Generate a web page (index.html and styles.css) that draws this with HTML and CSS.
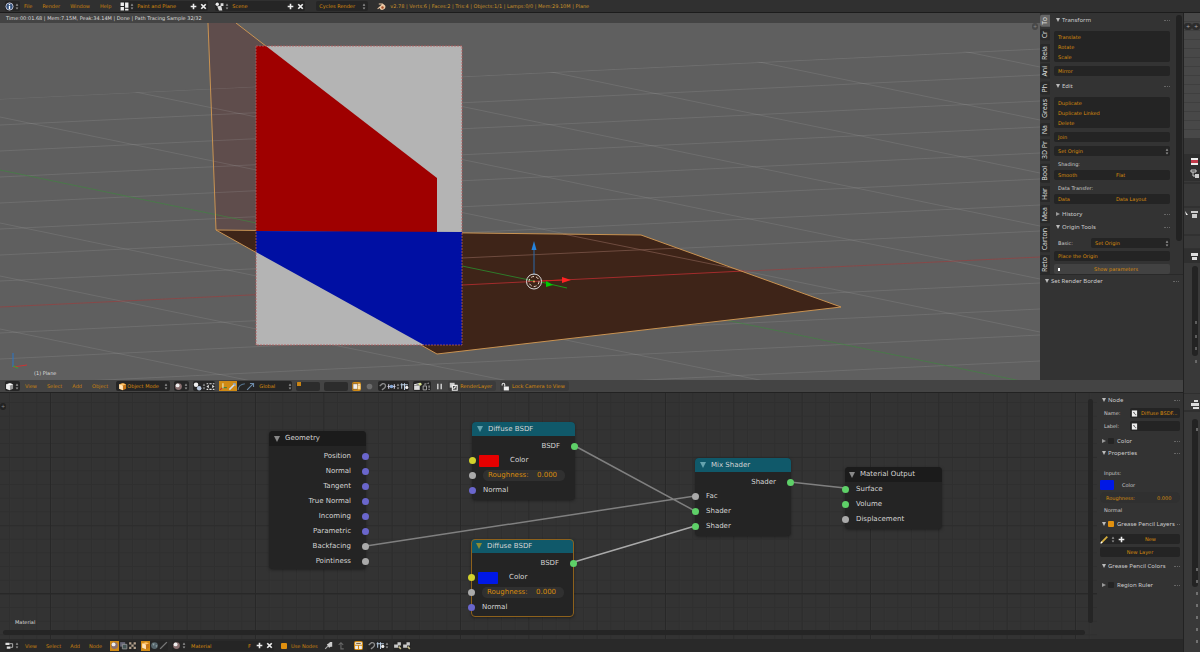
FILE: index.html
```
<!DOCTYPE html>
<html lang="en">
<head>
    <meta charset="UTF-8">
    <meta name="viewport" content="width=device-width, initial-scale=1.0">
    <title>Blender</title>
    <link rel="stylesheet" href="styles.css">
</head>
<body>

<svg class="defs" width="0" height="0">
    <symbol id="updown" viewBox="0 0 4 8"><path d="M0.5 3L2 0.5L3.5 3ZM0.5 5L2 7.5L3.5 5Z" fill="#999"/></symbol>
    <symbol id="plus" viewBox="0 0 8 8"><path d="M4 1.5V6.5M1.5 4H6.5" stroke="#eee" stroke-width="1.4"/></symbol>
    <symbol id="cross" viewBox="0 0 8 8"><path d="M2 2L6 6M6 2L2 6" stroke="#eee" stroke-width="1.5"/></symbol>
    <symbol id="info" viewBox="0 0 8 8"><circle cx="4" cy="4" r="3.2" fill="#34527c" stroke="#ccd" stroke-width="0.8"/><path d="M4 1.7V2.7M4 3.4V6.4" stroke="#fff" stroke-width="1.2"/></symbol>
    <symbol id="layout" viewBox="0 0 8 8"><path d="M0.5 0.5H3.5V3.5H0.5ZM4.5 0.5H7.5V5H4.5ZM0.5 4.5H3.5V7.5H0.5ZM4.5 6H7.5V7.5H4.5Z" fill="#eee"/></symbol>
    <symbol id="scene" viewBox="0 0 8 8"><circle cx="2" cy="2" r="1.5" fill="#eee"/><path d="M5 1H7.5V3.5H5ZM2 4L5.5 3L6.5 7.5H3.5Z" fill="#ddd"/></symbol>
    <symbol id="blender" viewBox="0 0 8 8"><path d="M0.3 5.8L4.3 2.2H1.6V1.3H5L7.2 3.2A2.7 2.7 0 1 1 2.2 5.3L0.8 6.5Z" fill="#ecc9a5"/><circle cx="4.9" cy="4.8" r="1.1" fill="#a8502a"/></symbol>
    <symbol id="cube" viewBox="0 0 8 8"><path d="M1 2L4.4 1L7.2 2V6L4.4 7.3L1 6Z" fill="#999"/><path d="M1 2L4.4 3V7.3L1 6Z" fill="#eee"/><path d="M1 2L4.4 1L7.2 2L4.4 3Z" fill="#fff"/></symbol>
    <symbol id="ocube" viewBox="0 0 8 8"><path d="M1 2L4.4 1L7.2 2V6L4.4 7.3L1 6Z" fill="#c57518"/><path d="M1 2L4.4 3V7.3L1 6Z" fill="#ffe3b5"/><path d="M1 2L4.4 1L7.2 2L4.4 3Z" fill="#ffc56a"/></symbol>
    <symbol id="ball" viewBox="0 0 8 8"><circle cx="4" cy="4" r="3" fill="#8a7070"/><circle cx="3.2" cy="3" r="1.7" fill="#eee"/></symbol>
    <symbol id="world" viewBox="0 0 8 8"><circle cx="4" cy="4" r="3" fill="#56656c"/><path d="M2 2.5L4 2L3.5 4.5ZM5 4L6.5 3.5L5.5 6Z" fill="#91a3a3"/></symbol>
    <symbol id="dot" viewBox="0 0 8 8"><circle cx="4" cy="4" r="2.5" fill="#888"/></symbol>
    <symbol id="pivot" viewBox="0 0 8 8"><circle cx="2.7" cy="2.5" r="2" fill="#eee"/><circle cx="5.5" cy="5.5" r="2" fill="#b9c8de"/></symbol>
    <symbol id="center" viewBox="0 0 8 8"><path d="M0.5 1.5H2M3 1.5H5M6 1.5H7.5M0.5 6.5H2M3 6.5H5M6 6.5H7.5" stroke="#ddd"/><path d="M0.3 4L2.5 2.5V5.5ZM7.7 4L5.5 2.5V5.5Z" fill="#ddd"/></symbol>
    <symbol id="axes" viewBox="0 0 8 8"><path d="M3 5H7" stroke="#3f7d3c"/><path d="M3 5L1 7" stroke="#b33"/><path d="M3.5 1V5.5" stroke="#e8e8c0"/></symbol>
    <symbol id="move" viewBox="0 0 8 8"><path d="M1.2 6.8L6 2" stroke="#cfdcec" stroke-width="1.4"/><path d="M4 1H7V4Z" fill="#86a9cd"/></symbol>
    <symbol id="arrow" viewBox="0 0 8 8"><path d="M1 7L6.5 1.5M3.5 1.3H6.7V4.5" fill="none" stroke="#6d8cab"/></symbol>
    <symbol id="arc" viewBox="0 0 8 8"><path d="M1 7C1 4 3 2 7 1.5" fill="none" stroke="#56728a"/></symbol>
    <symbol id="brush" viewBox="0 0 8 8"><path d="M1 7L7 1" stroke="#777" stroke-width="1.2"/></symbol>
    <symbol id="pencil" viewBox="0 0 8 8"><path d="M1 7L6.5 1.5" stroke="#d6ae3d" stroke-width="1.6"/><path d="M0.6 7.4L2 6" stroke="#fff"/></symbol>
    <symbol id="lock" viewBox="0 0 8 8"><path d="M2.5 4H7V7.5H2.5Z" fill="#eee"/><path d="M3.3 4V2.3C3.3 0.7 1 0.7 1 2.3V3" fill="none" stroke="#ddd"/></symbol>
    <symbol id="magnet" viewBox="0 0 8 8"><path d="M1.5 3.5L4 1.5C7 1 7.5 4 5.5 5.5L3.5 7" fill="none" stroke="#8c8c8c" stroke-width="1.2"/></symbol>
    <symbol id="snap" viewBox="0 0 8 8"><path d="M0.5 4H7.5M1.5 2V6M6.5 2V6" stroke="#ccd" stroke-width="1"/><circle cx="4" cy="4" r="1.6" fill="#86a9d8"/></symbol>
    <symbol id="snapgrid" viewBox="0 0 8 8"><path d="M1.5 1V6M4 1V7M0.5 2.5H7" stroke="#b7cbe1" stroke-width="0.9"/><circle cx="6" cy="4.8" r="1.4" fill="#eee"/></symbol>
    <symbol id="clapper" viewBox="0 0 8 8"><path d="M1 3H6V7H1Z" fill="#ddd"/><path d="M1 2.5L6 1.3" stroke="#eee"/><circle cx="6.3" cy="2" r="1.3" fill="#d9e28d"/></symbol>
    <symbol id="clip" viewBox="0 0 8 8"><path d="M1 3.5H4V7H1Z" fill="none" stroke="#aaa" stroke-width="0.8"/><path d="M2 2L6 1M6.3 3V7" stroke="#aaa" stroke-dasharray="2 1"/></symbol>
    <symbol id="pause" viewBox="0 0 8 8"><path d="M2.5 1.5V6.5M5.5 1.5V6.5" stroke="#ddd" stroke-width="1.2"/></symbol>
    <symbol id="layers" viewBox="0 0 8 8"><path d="M0.7 0.7H5V5H0.7Z" fill="#ccc"/><path d="M3 3H7.3V7.3H3Z" fill="#444" stroke="#eee"/><path d="M4 6L6 4" stroke="#eee"/></symbol>
    <symbol id="lockview" viewBox="0 0 8 8"><path d="M0.8 1.5H5V6.5H0.8Z" fill="#eee" stroke="#7a4c08" stroke-width="0.6"/><path d="M5 3.5H7.5V6.5H5Z" fill="#ffe0a0"/><path d="M5.5 3.5V2H7V3.5" fill="none" stroke="#fff" stroke-width="0.7"/></symbol>
    <symbol id="nodes" viewBox="0 0 10 8"><path d="M0.5 1H5V3.5H0.5ZM2 5H6V7.5H2Z" fill="#ddd"/><path d="M5 2H8.5V6H6" fill="none" stroke="#ddd" stroke-width="0.8"/></symbol>
    <symbol id="texture" viewBox="0 0 8 8"><path d="M1 1H3V3H1ZM5 1H7V3H5ZM3 3H5V5H3ZM1 5H3V7H1ZM5 5H7V7H5Z" fill="#b3a18d"/></symbol>
    <symbol id="copy" viewBox="0 0 8 8"><path d="M1 1H5.5V5H1Z" fill="#667"/><path d="M3 3H7V7H3Z" fill="#455" stroke="#999" stroke-width="0.7"/></symbol>
    <symbol id="page" viewBox="0 0 8 8"><path d="M1 0.5H7V7.5H1Z" fill="#eee"/><path d="M2.5 3H4M3.3 3L5.3 5.5H6" fill="none" stroke="#555"/></symbol>
    <symbol id="pin" viewBox="0 0 8 8"><path d="M1 7L3.5 4.5" stroke="#aaa"/><path d="M2.5 3L5 1.5V0.8H7.3V5H6L4.5 6Z" fill="#ccc"/></symbol>
    <symbol id="up" viewBox="0 0 8 8"><path d="M6 7H3.5V2M1.5 3.5L3.5 1.5L5.5 3.5" fill="none" stroke="#666"/></symbol>
    <symbol id="backdrop" viewBox="0 0 8 8"><path d="M1 1H7V3.3H1ZM1 4.2H3.5V7H1ZM4.5 4.2H7V7H4.5Z" fill="#eee"/><path d="M2 2.2H6" stroke="#564015" stroke-width="0.7"/></symbol>
    <symbol id="paste" viewBox="0 0 8 8"><path d="M1 6V3H4V1H7V4H4.5V6Z" fill="#c9c9c9"/><path d="M5 5L7 7" stroke="#c7bd8a" stroke-width="1.3"/></symbol>
</svg>

<header class="topbar">
    <button class="type" aria-label="Editor type"><svg class="icon"><use href="#info"/></svg><svg class="updown"><use href="#updown"/></svg></button>
    <nav class="menu"><a href="#">File</a><a href="#">Render</a><a href="#">Window</a><a href="#">Help</a></nav>
    <div class="field screen">
        <svg class="icon"><use href="#layout"/></svg><svg class="updown"><use href="#updown"/></svg>
        <input aria-label="Screen layout" value="Paint and Plane">
        <button aria-label="Add screen"><svg class="icon"><use href="#plus"/></svg></button>
        <button aria-label="Delete screen"><svg class="icon"><use href="#cross"/></svg></button>
    </div>
    <div class="field scene">
        <svg class="icon"><use href="#scene"/></svg><svg class="updown"><use href="#updown"/></svg>
        <input aria-label="Scene" value="Scene">
        <button aria-label="Add scene"><svg class="icon"><use href="#plus"/></svg></button>
        <button aria-label="Delete scene"><svg class="icon"><use href="#cross"/></svg></button>
    </div>
    <div class="field engine">
        <select aria-label="Render engine"><option>Cycles Render</option></select>
        <svg class="updown"><use href="#updown"/></svg>
    </div>
    <svg class="icon logo"><use href="#blender"/></svg>
    <span class="stats">v2.78 | Verts:6 | Faces:2 | Tris:4 | Objects:1/1 | Lamps:0/0 | Mem:29.10M | Plane</span>
</header>

<div class="workspace">
<main class="editors">

    <section class="view3d">
        <div class="view3d-body">
            <div class="viewport">
                <p class="render-info">Time:00:01.68 | Mem:7.15M, Peak:34.14M | Done | Path Tracing Sample 32/32</p>
                <svg class="scene3d" viewBox="0 23 1040 357" preserveAspectRatio="xMinYMin slice">
                    <polygon points="208,23 236,23 437,178 437,232 216,230" fill="#5f4d4c"/>
                    <clipPath id="floor"><polygon points="0,99 1040,48 1040,380 0,380"/></clipPath>
                    <g clip-path="url(#floor)" fill="none" stroke="#aaa" stroke-opacity="0.2">
                        <path d="M0 99L1040 49M0 125L1040 75M0 151L1040 101M0 177L1040 127M0 203L1040 153M0 229L1040 179M0 255L1040 205M0 281L1040 231M0 333L1040 283M0 359L1040 309M0 385L1040 335M0 411L1040 361"/>
                        <path d="M0 -201L1040 13M0 -148L1040 67M0 -95L1040 120M0 -42L1040 173M0 11L1040 226M0 64L1040 279M0 117L1040 332M0 223L1040 438M0 276L1040 491M0 329L1040 544"/>
                    </g>
                    <path d="M0 307L1040 257" stroke="#a33a3a" stroke-opacity="0.6"/>
                    <path d="M0 170L1040 385" stroke="#3c8a3c" stroke-opacity="0.6"/>
                    <polygon points="216,230 641,235 841,307 437,354" fill="#3e2418"/>
                    <path d="M462 258L680 248M563 234L741 270" stroke="#7a5548" stroke-opacity="0.8"/>
                    <path d="M462 285L744 271" stroke="#a32c2c"/>
                    <path d="M462 266L534 281" stroke="#2f7a2a"/>
                    <path d="M208 23L216 230M236 23L437 178M216 230L641 235L841 307L437 354Z" fill="none" stroke="#c99352"/>
                    <rect x="256" y="46" width="206" height="299" fill="#b4b4b4"/>
                    <polygon points="256,46 266,46 437,178 437,233 256,231" fill="#9f0000"/>
                    <polygon points="256,231 462,232 462,345 424,345 256,252" fill="#000fa3"/>
                    <rect x="256" y="46" width="206" height="299" fill="none" stroke="#b85a5a" stroke-dasharray="2 1" stroke-width="0.8"/>
                    <path d="M534 275V250" stroke="#2b68a8"/><path d="M534 241L531.5 250H536.5Z" fill="#2583dd"/>
                    <path d="M541 281L562 280" stroke="#c22"/><path d="M571 280L562 277V283Z" fill="#f22"/>
                    <path d="M541 282L567 288" stroke="#1a9a1a"/><path d="M553 285L546 281V287Z" fill="#0c0"/>
                    <circle cx="534" cy="281.5" r="7.5" fill="none" stroke="#ddd"/><circle cx="534" cy="281.5" r="5" fill="none" stroke="#e9d3c3" stroke-dasharray="3 2"/><circle cx="534" cy="281.5" r="1" fill="#f3a25a"/>
                    <path d="M13 367V353" stroke="#2a77c8"/><path d="M13 367L27 365" stroke="#c33"/><path d="M13 366L18 368" stroke="#3a3"/>
                </svg>
                <span class="object-name">(1) Plane</span>
                <span class="expand right">+</span>
            </div>
            <aside class="tools">
                <div class="tools-scroll">
                    <div class="tabs">
                        <button class="tab active">To</button><button class="tab">Cr</button><button class="tab">Rela</button><button class="tab">Ani</button><button class="tab">Ph</button><button class="tab">Greas</button><button class="tab">Na</button><button class="tab">3D Pr</button><button class="tab">Bool</button><button class="tab">Har</button><button class="tab">Mea</button><button class="tab">Carton</button><button class="tab">Reto</button>
                    </div>
                    <div class="tools-list">
                        <h2 class="head">Transform</h2>
                        <div class="stack"><button>Translate</button><button>Rotate</button><button>Scale</button></div>
                        <button class="btn">Mirror</button>
                        <h2 class="head">Edit</h2>
                        <div class="stack"><button>Duplicate</button><button>Duplicate Linked</button><button>Delete</button></div>
                        <button class="btn">Join</button>
                        <div class="pick"><select aria-label="Set Origin"><option>Set Origin</option></select><svg class="updown"><use href="#updown"/></svg></div>
                        <p class="label">Shading:</p>
                        <div class="pair"><button>Smooth</button><button>Flat</button></div>
                        <p class="label">Data Transfer:</p>
                        <div class="pair"><button>Data</button><button>Data Layout</button></div>
                        <h2 class="head closed">History</h2>
                        <h2 class="head">Origin Tools</h2>
                        <div class="basic"><label for="basic">Basic:</label><div class="pick"><select id="basic"><option>Set Origin</option></select><svg class="updown"><use href="#updown"/></svg></div></div>
                        <button class="btn">Place the Origin</button>
                        <button class="btn params">Show parameters</button>
                    </div>
                    <div class="scrollbar"></div>
                </div>
                <h2 class="head operator">Set Render Border</h2>
            </aside>
        </div>
        <div class="bar">
            <button class="type" aria-label="Editor type"><svg class="icon"><use href="#cube"/></svg><svg class="updown"><use href="#updown"/></svg></button>
            <nav class="menu"><a href="#">View</a><a href="#">Select</a><a href="#">Add</a><a href="#">Object</a></nav>
            <div class="field mode"><svg class="icon"><use href="#ocube"/></svg><select aria-label="Mode"><option>Object Mode</option></select><svg class="updown"><use href="#updown"/></svg></div>
            <button class="type" aria-label="Shading"><svg class="icon"><use href="#ball"/></svg><svg class="updown"><use href="#updown"/></svg></button>
            <div class="group"><button aria-label="Pivot"><svg class="icon"><use href="#pivot"/></svg><svg class="updown"><use href="#updown"/></svg></button><button aria-label="Centers"><svg class="icon"><use href="#center"/></svg></button></div>
            <div class="group"><button class="on" aria-label="Manipulator"><svg class="icon"><use href="#axes"/></svg></button><button class="on" aria-label="Translate"><svg class="icon"><use href="#move"/></svg></button><button aria-label="Rotate"><svg class="icon"><use href="#arc"/></svg></button><button aria-label="Scale"><svg class="icon"><use href="#arrow"/></svg></button>
                <select class="orient" aria-label="Orientation"><option>Global</option></select><svg class="updown"><use href="#updown"/></svg></div>
            <div class="layer used"></div><div class="layer"></div>
            <button class="on" aria-label="Lock layers"><svg class="icon"><use href="#lockview"/></svg></button>
            <button class="dim" aria-label="Proportional"><svg class="icon"><use href="#dot"/></svg></button>
            <div class="group"><button aria-label="Snap"><svg class="icon"><use href="#magnet"/></svg></button><button aria-label="Snap element"><svg class="icon"><use href="#snap"/></svg><svg class="updown"><use href="#updown"/></svg></button><button aria-label="Snap target"><svg class="icon"><use href="#snapgrid"/></svg></button></div>
            <div class="group"><button aria-label="Render image"><svg class="icon"><use href="#clapper"/></svg></button><button aria-label="Render animation"><svg class="icon"><use href="#clip"/></svg></button></div>
            <button aria-label="Pause"><svg class="icon"><use href="#pause"/></svg></button>
            <button class="wide"><svg class="icon"><use href="#layers"/></svg>RenderLayer</button>
            <button class="wide"><svg class="icon"><use href="#lock"/></svg>Lock Camera to View</button>
        </div>
    </section>

    <section class="node-editor">
        <div class="node-body">
            <div class="canvas">
                <svg class="grid" width="100%" height="100%">
                    <pattern id="minor" width="13.667" height="13.667" x="9" y="9" patternUnits="userSpaceOnUse"><path d="M0.5 0V14M0 0.5H14" stroke="#2f2f2f" fill="none"/></pattern>
                    <pattern id="major" width="68.333" height="68.333" x="50" y="64" patternUnits="userSpaceOnUse"><path d="M0.5 0V69M0 0.5H69" stroke="#2c2c2c" fill="none"/></pattern>
                    <pattern id="block" width="205" height="205" x="50" y="200" patternUnits="userSpaceOnUse"><path d="M0.5 0V205M0 0.5H205" stroke="#282828" fill="none"/></pattern>
                    <rect width="100%" height="100%" fill="url(#minor)"/><rect width="100%" height="100%" fill="url(#major)"/><rect width="100%" height="100%" fill="url(#block)"/>
                    <g stroke="#808080" stroke-width="1.5"><path d="M366 153L695 103M575 53L695 118M790 89L845 95"/><path d="M574 169L695 133" stroke="#aaa"/></g>
                </svg>

                <article class="node geometry">
                    <h3>Geometry</h3>
                    <p class="out vector">Position</p>
                    <p class="out vector">Normal</p>
                    <p class="out vector">Tangent</p>
                    <p class="out vector">True Normal</p>
                    <p class="out vector">Incoming</p>
                    <p class="out vector">Parametric</p>
                    <p class="out value">Backfacing</p>
                    <p class="out value">Pointiness</p>
                </article>

                <article class="node shader diffuse-red">
                    <h3>Diffuse BSDF</h3>
                    <p class="out closure">BSDF</p>
                    <p class="in color"><input type="color" value="#e60000" id="c1"><label for="c1">Color</label></p>
                    <p class="in value"><label class="slider">Roughness:<input value="0.000"></label></p>
                    <p class="in vector">Normal</p>
                </article>

                <article class="node shader diffuse-blue selected">
                    <h3>Diffuse BSDF</h3>
                    <p class="out closure">BSDF</p>
                    <p class="in color"><input type="color" value="#0018e6" id="c2"><label for="c2">Color</label></p>
                    <p class="in value"><label class="slider">Roughness:<input value="0.000"></label></p>
                    <p class="in vector">Normal</p>
                </article>

                <article class="node shader mix">
                    <h3>Mix Shader</h3>
                    <p class="out closure">Shader</p>
                    <p class="in value">Fac</p>
                    <p class="in closure">Shader</p>
                    <p class="in closure">Shader</p>
                </article>

                <article class="node output">
                    <h3>Material Output</h3>
                    <p class="in closure">Surface</p>
                    <p class="in closure">Volume</p>
                    <p class="in value">Displacement</p>
                </article>

                <span class="expand">+</span>
                <span class="material-name">Material</span>
                <div class="hscroll"></div>
                <div class="vscroll"></div>
            </div>
            <aside class="props">
                <h2 class="head">Node</h2>
                <div class="prop"><label for="nname">Name:</label><div class="input"><svg class="icon"><use href="#page"/></svg><input id="nname" value="Diffuse BSDF..."></div></div>
                <div class="prop"><label for="nlabel">Label:</label><div class="input"><svg class="icon"><use href="#page"/></svg><input id="nlabel"></div></div>
                <h2 class="head closed"><label><input type="checkbox">Color</label></h2>
                <h2 class="head">Properties</h2>
                <p class="inputs">Inputs:</p>
                <div class="swatch"><input type="color" value="#0018e6" id="c3"><label for="c3">Color</label></div>
                <label class="slider">Roughness:<input value="0.000"></label>
                <p class="normal">Normal</p>
                <h2 class="head pencil"><label><input type="checkbox" checked>Grease Pencil Layers</label></h2>
                <button class="btn new"><svg class="icon"><use href="#pencil"/></svg><svg class="updown"><use href="#updown"/></svg><svg class="icon"><use href="#plus"/></svg><span>New</span></button>
                <button class="btn">New Layer</button>
                <h2 class="head colors">Grease Pencil Colors</h2>
                <h2 class="head closed ruler"><label><input type="checkbox">Region Ruler</label></h2>
            </aside>
        </div>
        <div class="bar dark">
            <button class="type" aria-label="Editor type"><svg class="icon"><use href="#nodes"/></svg><svg class="updown"><use href="#updown"/></svg></button>
            <nav class="menu"><a href="#">View</a><a href="#">Select</a><a href="#">Add</a><a href="#">Node</a></nav>
            <div class="group"><button class="on" aria-label="Shader nodes"><svg class="icon"><use href="#ball"/></svg></button><button aria-label="Compositing"><svg class="icon"><use href="#copy"/></svg></button><button aria-label="Texture nodes"><svg class="icon"><use href="#texture"/></svg></button></div>
            <div class="group"><button class="on" aria-label="Object"><svg class="icon"><use href="#ocube"/></svg></button><button aria-label="World"><svg class="icon"><use href="#world"/></svg></button><button aria-label="Line style"><svg class="icon"><use href="#brush"/></svg></button></div>
            <div class="field material"><svg class="icon"><use href="#ball"/></svg><svg class="updown"><use href="#updown"/></svg><input aria-label="Material" value="Material"><button>F</button><button aria-label="Add material"><svg class="icon"><use href="#plus"/></svg></button><button aria-label="Unlink"><svg class="icon"><use href="#cross"/></svg></button></div>
            <label class="use-nodes"><input type="checkbox" checked>Use Nodes</label>
            <button aria-label="Pin"><svg class="icon"><use href="#pin"/></svg></button>
            <button aria-label="Parent"><svg class="icon"><use href="#up"/></svg></button>
            <button class="on after" aria-label="Backdrop"><svg class="icon"><use href="#backdrop"/></svg></button>
            <div class="group"><button aria-label="Snap"><svg class="icon"><use href="#magnet"/></svg></button><button aria-label="Snap element"><svg class="icon"><use href="#snapgrid"/></svg><svg class="updown"><use href="#updown"/></svg></button></div>
            <div class="group"><button aria-label="Copy"><svg class="icon"><use href="#paste"/></svg></button><button aria-label="Paste"><svg class="icon"><use href="#paste"/></svg></button></div>
        </div>
    </section>
</main>

<!-- edge of the outliner and properties column -->
<aside class="edge">
    <div class="edge-view"><span>+</span><span>+</span></div>
    <svg class="edge-mid" width="16" height="255">
        <path d="M0 45H16M0 69H16M0 97H16M0 111H16" stroke="#2a2a2a"/>
        <path d="M0 16H16V43H0ZM0 111H16V125H0Z" fill="#2f2f2f"/>
        <path d="M7 20H14V27H7Z" fill="#eee"/><path d="M7 22H14V25H7Z" fill="#c33a4a"/>
        <path d="M7 32H12V34H7ZM9 34V38H11" fill="none" stroke="#ccc"/><path d="M11 36H15V40H11Z" fill="#ccc"/>
        <path d="M1 73L4 77H2Z" fill="#eee"/><path d="M7 73H14V75H7ZM8 76H13V80H8Z" fill="#ccc"/>
        <path d="M7 115H14V118H7ZM8 119H13V122H8Z" fill="#ddd"/>
        <rect x="8" y="128" width="6" height="90" rx="3" fill="#232323"/>
        <path d="M12 183V186M12 197V200M12 209V212M12 222V225" stroke="#999"/>
    </svg>
    <svg class="edge-low" width="16" height="259">
        <path d="M0 0H16M0 18H16" stroke="#262626"/><path d="M7 10H15V13H7ZM9 14H15V16H9ZM10 7H14V9H10Z" fill="#ddd"/>
        <rect x="8" y="26" width="6" height="168" rx="3" fill="#232323"/>
        <path d="M13 35V38M13 175V178M13 187V190M13 199V202M13 211V214M13 223V226M13 235V238M13 247V250" stroke="#aaa"/>
    </svg>
</aside>
</div>

</body>
</html>
```
FILE: styles.css
```
* {
    box-sizing: border-box;
}

body {
    margin: 0;
    height: 100vh;
    display: flex;
    flex-direction: column;
    overflow: hidden;
    background: #333;
    color: #ccc;
    font: 5px/10px "DejaVu Sans", sans-serif;
}

h2, h3, p {
    margin: 0;
    font-weight: normal;
}

button, input, select {
    font: inherit;
    color: #d98c0c;
    background: none;
    border: none;
    margin: 0;
    padding: 0;
    min-width: 0;
    appearance: none;
}

button, a, label {
    white-space: nowrap;
}

input[type="color"]::-webkit-color-swatch-wrapper {
    padding: 0;
}

input[type="color"]::-webkit-color-swatch {
    border: none;
    border-radius: 1px;
}

input[type="checkbox"] {
    width: 6px;
    height: 6px;
    border-radius: 1px;
    background: #242424;
}

input[type="checkbox"]:checked {
    background: #e0900f;
}

.defs {
    position: absolute;
}

.icon {
    width: 9px;
    height: 9px;
    flex: none;
    display: block;
}

.updown {
    width: 4px;
    height: 7px;
    flex: none;
    display: block;
}

/* header bars */
.topbar, .bar {
    display: flex;
    align-items: center;
    flex: none;
    height: 13px;
    padding-left: 5px;
    background: #303030;
}

.topbar {
    border-bottom: 1px solid #1c1c1c;
}

.bar {
    gap: 4px;
    background: #444;
    border-bottom: 1px solid #222;
}

.bar.dark {
    background: #292929;
    border: none;
}

.type, .group, .group button, .bar .wide, .field {
    display: flex;
    align-items: center;
    height: 10px;
}

.type, .group, .wide, .field {
    background: #252525;
    border-radius: 2px;
}

.type {
    gap: 1px;
    padding-right: 1px;
}

.menu {
    display: flex;
    gap: 10px;
    margin: 0 4px 0 1px;
}

.dark .menu {
    gap: 9px;
}

.topbar .menu {
    margin: 0 9px 0 4px;
}

.menu a {
    color: #c9820f;
    text-decoration: none;
}

.field input, .field select {
    flex: 1;
}

.screen, .scene {
    gap: 1px;
    margin-right: 7px;
}

.screen {
    width: 88px;
}

.scene {
    width: 90px;
    margin-right: 11px;
}

.screen input, .scene input {
    padding-left: 2px;
}

.engine {
    width: 52px;
    padding: 0 2px 0 3px;
    margin-right: 9px;
}

.logo {
    margin-right: 4px;
}

.stats {
    color: #c9922a;
}

.mode {
    width: 54px;
    padding: 0 2px;
}

.on {
    background: #d08a14;
}

.bar > .on {
    border-radius: 2px;
}

.orient {
    width: 33px;
    padding-left: 4px;
}

.dim {
    opacity: 0.6;
}

.layer {
    width: 24px;
    height: 9px;
    border-radius: 2px;
    background: #2c2c2c;
}

.layer.used {
    background: linear-gradient(#c98414, #c98414) 1px 0 / 4px 4px no-repeat #2c2c2c;
}

.bar .wide {
    gap: 2px;
    padding: 0 4px 0 1px;
    background: #3b3b3b;
}

.material {
    width: 102px;
    gap: 1px;
}

.material input {
    padding-left: 4px;
}

.material button {
    width: 9px;
}

.use-nodes {
    display: flex;
    align-items: center;
    gap: 4px;
    margin: 0 2px 0 3px;
    color: #c9820f;
}

.after {
    margin-left: 4px;
}

/* editors */
.workspace {
    flex: 1;
    display: flex;
    min-height: 0;
}

.editors {
    flex: 1;
    display: flex;
    flex-direction: column;
    min-width: 0;
}

.view3d {
    flex: 380 0 0;
    display: flex;
    flex-direction: column;
    min-height: 0;
}

.view3d-body {
    flex: 1;
    display: flex;
    min-height: 0;
}

.viewport {
    flex: 1;
    display: flex;
    flex-direction: column;
    position: relative;
    min-width: 0;
    overflow: hidden;
    background: #5f5f5f;
}

.render-info {
    flex: none;
    padding-left: 6px;
    background: #444;
    color: #ddd;
}

.scene3d {
    flex: 1;
    display: block;
    width: 100%;
    min-height: 0;
}

.object-name {
    position: absolute;
    left: 34px;
    bottom: 2px;
    color: #ddd;
}

.tools {
    width: 143px;
    flex: none;
    background: #333;
}

.tools-scroll {
    display: flex;
    height: 262px;
    padding: 2px 1px 0 0;
    border-bottom: 1px solid #292929;
}

.tabs {
    display: flex;
    flex-direction: column;
    justify-content: space-between;
    width: 10px;
}

.tab {
    writing-mode: vertical-rl;
    transform: rotate(180deg);
    width: 10px;
    padding: 2px 0;
    border-radius: 0 2px 2px 0;
    background: #292929;
    color: #ddd;
    font: 7px/10px "Noto Sans", sans-serif;
}

.tab.active {
    background: #666;
}

.tools-list {
    flex: 1;
    margin: 0 6px 0 4px;
}

.scrollbar {
    width: 6px;
    height: 226px;
    border-radius: 3px;
    background: #222;
}

.head {
    display: flex;
    align-items: center;
    gap: 2px;
    height: 10px;
    font: 6px/10px "Noto Sans", sans-serif;
}

.head::before {
    content: "";
    border: 2px solid transparent;
    border-top: 4px solid #bbb;
    border-bottom: none;
}

.head.closed::before {
    border: 2px solid transparent;
    border-left: 4px solid #999;
    border-right: none;
}

.head::after {
    content: "";
    width: 6px;
    margin-left: auto;
    border-top: 1px dotted #666;
}

.tools-list .head {
    margin: 0 0 6px 2px;
}

.stack, .pair, .btn, .pick {
    background: #242424;
    border-radius: 2px;
}

.stack {
    height: 31px;
    padding-top: 1px;
    margin-bottom: 4px;
}

.stack button, .btn {
    display: block;
    width: 100%;
    height: 10px;
    padding-left: 4px;
    text-align: left;
}

.tools-list > .btn + .head {
    margin-top: 5px;
}

.pick {
    display: flex;
    align-items: center;
    height: 10px;
    padding-right: 1px;
}

.pick select {
    flex: 1;
    padding-left: 4px;
}

.tools-list > .pick {
    margin: 4px 0 3px;
}

.label {
    padding-left: 4px;
    margin-bottom: 1px;
}

.pair {
    display: flex;
    height: 10px;
    margin-bottom: 3px;
}

.pair button {
    flex: 1;
    padding-left: 4px;
    text-align: left;
}

.tools-list .head.closed {
    margin: 5px 0 3px 2px;
}

.basic {
    display: flex;
    align-items: center;
    padding-left: 4px;
    margin-bottom: 3px;
}

.basic .pick {
    width: 79px;
    margin-left: auto;
}

.tools-list .params {
    margin-top: 3px;
    padding-left: 8px;
    text-align: center;
    background: linear-gradient(90deg, transparent 4px, #fff 4px, #fff 6px, transparent 6px) 0 4px / 8px 3px no-repeat #424242;
}

.operator {
    padding: 2px 4px 0 5px;
}

/* node editor */
.node-editor {
    flex: 259 0 0;
    display: flex;
    flex-direction: column;
    min-height: 0;
}

.node-body {
    flex: 1;
    display: flex;
    min-height: 0;
}

.canvas {
    flex: 1;
    position: relative;
    overflow: hidden;
    background: #333;
}

.grid {
    position: absolute;
    inset: 0;
}

.node {
    position: absolute;
    width: 97px;
    padding-bottom: 2px;
    border-radius: 4px;
    background: #242424;
    box-shadow: 0 1px 3px #1118;
    font-size: 7px;
    line-height: 15px;
    color: #d4d4d4;
}

.node h3 {
    display: flex;
    align-items: center;
    gap: 5px;
    height: 15px;
    margin-bottom: 3px;
    padding-left: 5px;
    border-radius: 4px 4px 0 0;
    background: #1b1b1b;
    font-size: 7px;
}

.node h3::before {
    content: "";
    border: 3px solid transparent;
    border-top: 6px solid #888;
    border-bottom: none;
}

.node.shader h3 {
    height: 14px;
    background: #10596a;
}

.node.shader h3::before {
    border-top-color: #65a3ae;
}

.node p {
    display: flex;
    align-items: center;
    position: relative;
    height: 15px;
    padding: 0 15px 0 11px;
}

.node .out {
    justify-content: flex-end;
}

.node p::before {
    content: "";
    position: absolute;
    left: -3px;
    top: 4px;
    width: 7px;
    height: 7px;
    border-radius: 50%;
    background: #6a66cc;
}

.node .out::before {
    left: auto;
    right: -3px;
}

.node .value::before {
    background: #aaa;
}

.node .closure::before {
    background: #5ed068;
}

.node .color::before {
    background: #d2d22c;
}

.node.shader .out {
    height: 14px;
}

.geometry {
    left: 269px;
    top: 38px;
    padding-bottom: 0;
}

.diffuse-red, .diffuse-blue {
    left: 472px;
    top: 29px;
    width: 103px;
}

.diffuse-blue {
    left: 471px;
    top: 146px;
}

.selected {
    outline: 1px solid #8d611c;
    outline-offset: -1px;
}

.node.selected h3::before {
    border-top-color: #8d8b35;
}

.node .color {
    padding-left: 7px;
    gap: 11px;
}

.node input[type="color"] {
    width: 20px;
    height: 12px;
}

.slider {
    display: flex;
    justify-content: space-between;
    align-items: center;
    height: 11px;
    border-radius: 5px;
    background: #303030;
    color: #d98c0c;
}

.node .slider {
    width: 82px;
    flex: none;
    padding: 0 4px 0 5px;
}

.node .slider input {
    width: 24px;
}

.mix {
    left: 695px;
    top: 65px;
    width: 96px;
}

.output {
    left: 845px;
    top: 74px;
}

.node.output h3 {
    margin-bottom: 0;
    padding-left: 4px;
}

.expand {
    position: absolute;
    left: 0;
    top: 10px;
    width: 6px;
    line-height: 7px;
    text-align: center;
    background: #222;
    border-radius: 3px;
    color: #888;
}

.expand.right {
    left: auto;
    right: 2px;
    background: #484848;
}

.material-name {
    position: absolute;
    left: 15px;
    bottom: 12px;
    color: #ddd;
}

.hscroll, .vscroll {
    position: absolute;
    background: #252525;
    border-radius: 3px;
}

.hscroll {
    left: 3px;
    right: 12px;
    bottom: 4px;
    height: 5px;
}

.vscroll {
    right: 4px;
    top: 6px;
    bottom: 16px;
    width: 5px;
}

.props {
    width: 86px;
    flex: none;
    padding: 2px 3px 0 3px;
    background: #333;
}

.props .head {
    padding-left: 2px;
}

.props .head label, .props .swatch {
    display: flex;
    align-items: center;
    gap: 3px;
}

.prop {
    display: flex;
    align-items: center;
    justify-content: space-between;
    padding-left: 4px;
    margin: 3px 0;
}

.prop .input {
    display: flex;
    align-items: center;
    width: 50px;
    height: 10px;
    padding-left: 1px;
    border-radius: 2px;
    background: #242424;
}

.prop .icon {
    width: 7px;
    height: 7px;
}

.prop input {
    flex: 1;
    padding-left: 3px;
}

.props .closed {
    margin: 5px 0 2px;
}

.inputs {
    padding: 10px 0 2px 4px;
}

.swatch input {
    width: 14px;
    height: 10px;
}

.props .swatch {
    gap: 8px;
    margin-bottom: 2px;
}

.props .slider {
    padding: 0 6px;
}

.props .slider input {
    width: 17px;
}

.normal {
    padding: 2px 0 4px 4px;
}

.props .btn {
    padding: 0;
    text-align: center;
    margin-bottom: 3px;
}

.props .pencil {
    margin-bottom: 5px;
}

.props .new {
    display: flex;
    align-items: center;
    gap: 2px;
    padding-right: 7px;
}

.new span {
    flex: 1;
}

.props .colors {
    margin-top: 4px;
}

.props .ruler {
    margin-top: 9px;
}

/* right edge */
.edge {
    flex: none;
    width: 17px;
    border-left: 1px solid #222;
    background: #393939;
}

.edge-view {
    display: flex;
    height: 125px;
    padding-top: 10px;
    background: repeating-linear-gradient(#0000 0 8px, #3f3f3f 8px 9px) #484848;
}

.edge-view span {
    flex: 1;
    height: 7px;
    line-height: 7px;
    text-align: center;
    background: #2c2c2c;
    border-radius: 3px;
    color: #aaa;
}

.edge-mid, .edge-low {
    display: block;
}
```
